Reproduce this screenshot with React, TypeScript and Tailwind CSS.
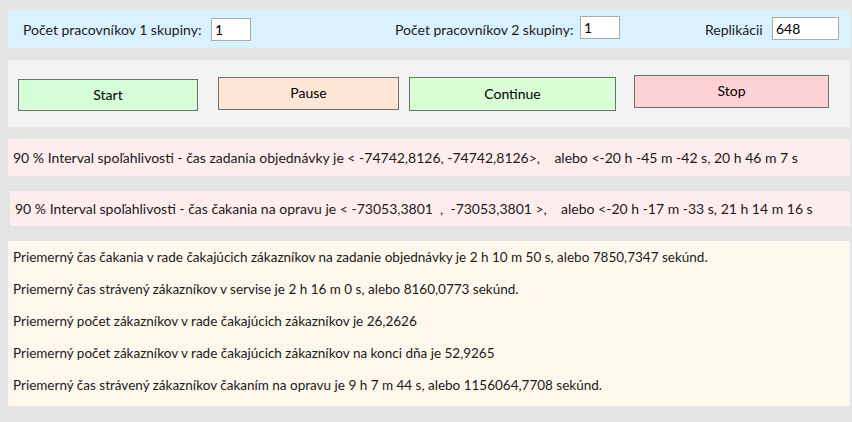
const font = { fontFamily: 'Lato, "Noto Sans", sans-serif' };

const Field = ({ value, className }: { value: string; className: string }) => (
  <div className={`bg-white border border-[#ababab] h-[23px] flex items-center pl-[3px] text-[14px] text-black ${className}`}>
    {value}
  </div>
);

const Btn = ({ label, className }: { label: string; className: string }) => (
  <div className={`border border-[#6f6f6f] flex items-center justify-center pb-[2px] text-[14px] text-black ${className}`}>
    {label}
  </div>
);

const results = [
  "Priemerný čas čakania v rade čakajúcich zákazníkov na zadanie objednávky je 2 h 10 m 50 s, alebo 7850,7347 sekúnd.",
  "Priemerný čas strávený zákazníkov v servise je 2 h 16 m 0 s, alebo 8160,0773 sekúnd.",
  "Priemerný počet zákazníkov v rade čakajúcich zákazníkov je 26,2626",
  "Priemerný počet zákazníkov v rade čakajúcich zákazníkov na konci dňa je 52,9265",
  "Priemerný čas strávený zákazníkov čakaním na opravu je 9 h 7 m 44 s, alebo 1156064,7708 sekúnd.",
];

export default function App() {
  return (
    <div className="w-[852px] h-[422px] bg-[#e4e4e4] flex flex-col text-[#1a1a1a] overflow-hidden" style={font}>
      {/* parametre */}
      <div className="mt-[10px] ml-[8px] mr-[2px] h-[38px] bg-[#daf2fe] flex items-start text-[14px]">
        <span className="ml-[15px] mt-[9px] w-[188px] whitespace-nowrap">Počet pracovníkov 1 skupiny:</span>
        <Field value="1" className="mt-[8px] w-[40px]" />
        <span className="ml-[144px] mt-[9px] w-[185px] whitespace-nowrap">Počet pracovníkov 2 skupiny:</span>
        <Field value="1" className="mt-[6px] w-[40px]" />
        <span className="ml-[85px] mt-[9px] w-[67px]">Replikácii</span>
        <Field value="648" className="mt-[7px] w-[67px]" />
      </div>

      {/* ovladanie */}
      <div className="mt-[12px] ml-[8px] mr-[2px] h-[67px] bg-[#f3f3f3] flex items-start">
        <Btn label="Start" className="ml-[10px] mt-[19px] w-[180px] h-[32px] bg-[#d4fdd8]" />
        <Btn label="Pause" className="ml-[20px] mt-[17px] w-[181px] h-[33px] bg-[#fde6d6]" />
        <Btn label="Continue" className="ml-[10px] mt-[17px] w-[207px] h-[34px] bg-[#d9fdd4]" />
        <Btn label="Stop" className="ml-[18px] mt-[15px] w-[195px] h-[33px] bg-[#fdd2d4]" />
      </div>

      {/* intervaly */}
      <div className="mt-[12px] ml-[8px] mr-[2px] h-[37px] bg-[#fdeded] flex items-center pl-[5px] text-[14px] whitespace-pre">
        {"90 % Interval spoľahlivosti - čas zadania objednávky je < -74742,8126, -74742,8126>,    alebo <-20 h -45 m -42 s, 20 h 46 m 7 s"}
      </div>

      <div className="mt-[15px] ml-[10px] mr-[2px] h-[35px] bg-[#fdeded] flex items-center pl-[5px] text-[14px] whitespace-pre">
        {"90 % Interval spoľahlivosti - čas čakania na opravu je < -73053,3801  ,  -73053,3801 >,    alebo <-20 h -17 m -33 s, 21 h 14 m 16 s"}
      </div>

      {/* vysledky */}
      <div className="mt-[15px] ml-[8px] mr-[2px] h-[165px] bg-[#fef8ec] flex flex-col pl-[5px] text-[13.5px]">
        {results.map((r) => (
          <div key={r} className="h-[32px] flex items-center whitespace-nowrap">
            {r}
          </div>
        ))}
      </div>
    </div>
  );
}
